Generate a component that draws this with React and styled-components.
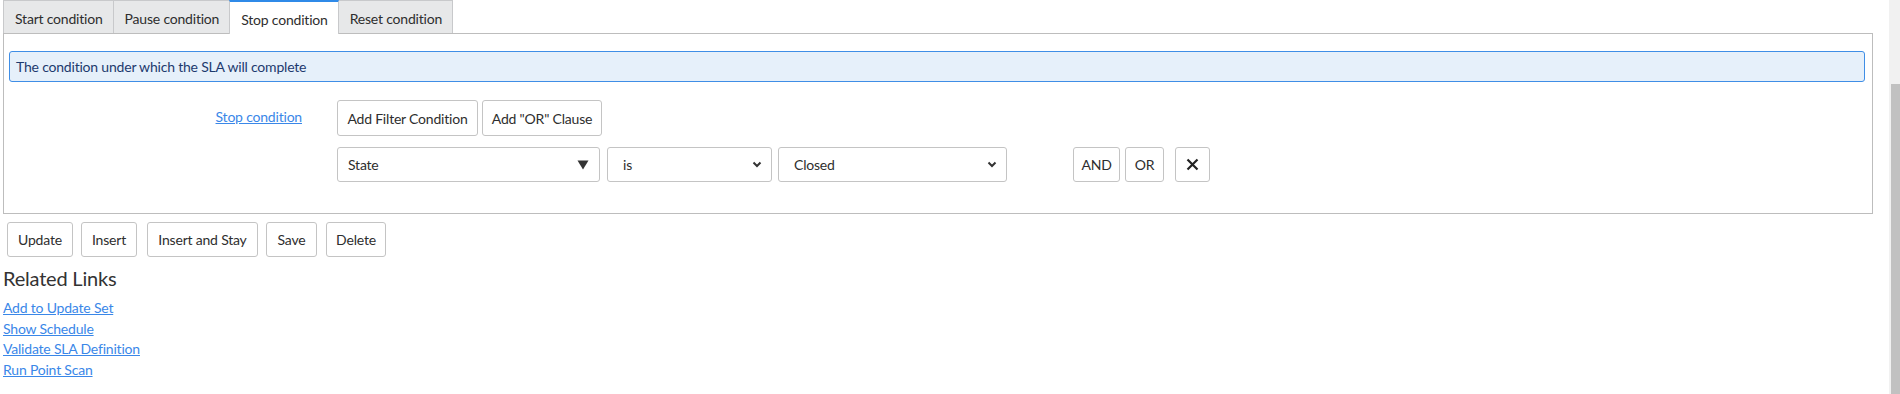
import { createGlobalStyle, styled } from "styled-components";

const GlobalStyle = createGlobalStyle`
	html, body {
		margin: 0;
		padding: 0;
		background: #fff;
	}
	body {
		font-family: Lato, "Liberation Sans", sans-serif;
		font-size: 14px;
		letter-spacing: -0.2px;
		color: #2e2e2e;
	}
`;

const Page = styled.div`
	display: flex;
	height: 394px;
	overflow: hidden;
`;

const Main = styled.div`
	flex: 1;
	padding: 0 16px 0 3px;
`;

const ScrollTrack = styled.div`
	width: 11px;
	background: #f1f1f1;
	display: flex;
	flex-direction: column;
	padding-top: 84px;
	padding-left: 2px;
	box-sizing: border-box;
`;

const ScrollThumb = styled.div`
	flex: 1;
	background: #c1c1c1;
`;

const TabBar = styled.div`
	display: flex;
	height: 33px;
`;

const Tab = styled.div`
	display: flex;
	align-items: center;
	padding: 2px 10px 0 11px;
	box-sizing: border-box;
	height: ${(p) => (p.$active ? "34px" : "33px")};
	margin-left: -1px;
	border: 1px solid #c8c9cb;
	border-bottom: none;
	border-top: ${(p) => (p.$active ? "2px solid #2f8ae8" : "1px solid #c8c9cb")};
	background: ${(p) => (p.$active ? "#fff" : "#e7e8e9")};
	position: relative;
	z-index: ${(p) => (p.$active ? 2 : 1)};
	color: #2e2e2e;
	&:first-child {
		margin-left: 0;
	}
`;

const Panel = styled.div`
	border: 1px solid #bdbdbd;
	padding: 17px 7px 31px 5px;
	height: 181px;
	box-sizing: border-box;
`;

const InfoBox = styled.div`
	height: 31px;
	box-sizing: border-box;
	border: 1px solid #3f8ee6;
	border-radius: 3px;
	background: #e6f0fa;
	color: #1d3a6e;
	display: flex;
	align-items: center;
	padding-left: 6px;
`;

const FilterGrid = styled.div`
	display: grid;
	grid-template-columns: 293px 1fr;
	column-gap: 35px;
	margin-top: 18px;
`;

const LabelCell = styled.div`
	text-align: right;
	padding-top: 8px;
`;

const Link = styled.a`
	color: #3a87e8;
	text-decoration: underline;
	cursor: pointer;
`;

const FilterBody = styled.div`
	display: flex;
	flex-direction: column;
	gap: 11px;
`;

const Row = styled.div`
	display: flex;
	align-items: center;
	gap: ${(p) => p.$gap || "0px"};
`;

const Button = styled.button`
	font: inherit;
	letter-spacing: inherit;
	white-space: nowrap;
	color: #2e2e2e;
	background: #fff;
	border: 1px solid #c4c4c4;
	border-radius: 3px;
	box-sizing: border-box;
	height: ${(p) => p.$h || "35px"};
	width: ${(p) => (p.$w ? `${p.$w}px` : "auto")};
	padding: 0;
	margin-left: ${(p) => p.$ml || 0}px;
	display: flex;
	align-items: center;
	justify-content: center;
	flex-shrink: 0;
	cursor: pointer;
`;

const SelectBox = styled.div`
	width: ${(p) => p.$w}px;
	height: 35px;
	box-sizing: border-box;
	border: 1px solid #c4c4c4;
	border-radius: 3px;
	margin-left: ${(p) => p.$ml || 0}px;
	display: flex;
	align-items: center;
	justify-content: space-between;
	padding: 0 ${(p) => p.$padR}px 0 ${(p) => p.$padL}px;
	color: #2e2e2e;
	background: #fff;
`;

const Actions = styled.div`
	display: flex;
	margin: 8px 0 0 4px;
`;

const Heading = styled.h2`
	margin: 8px 0 0 0;
	font-size: 20px;
	font-weight: 400;
	color: #333;
	line-height: 26px;
`;

const LinkList = styled.div`
	display: flex;
	flex-direction: column;
	margin-top: 7px;
	line-height: 20.7px;
	font-size: 14px;
`;

function Chevron() {
	return (
		<svg width="10" height="7" viewBox="0 0 10 7">
			<path d="M1.5 1.5 L5 5 L8.5 1.5" fill="none" stroke="#333" strokeWidth="2" />
		</svg>
	);
}

function Triangle() {
	return (
		<svg width="12" height="10" viewBox="0 0 12 10">
			<path d="M0.5 0.5 H11.5 L6 9.5 Z" fill="#333" />
		</svg>
	);
}

function Cross() {
	return (
		<svg width="13" height="13" viewBox="0 0 13 13">
			<path d="M1.5 1.5 L11.5 11.5 M11.5 1.5 L1.5 11.5" stroke="#222" strokeWidth="2.2" />
		</svg>
	);
}

const tabs = ["Start condition", "Pause condition", "Stop condition", "Reset condition"];
const actions = [
	{ label: "Update", w: 66, ml: 0 },
	{ label: "Insert", w: 56, ml: 8 },
	{ label: "Insert and Stay", w: 111, ml: 10 },
	{ label: "Save", w: 51, ml: 8 },
	{ label: "Delete", w: 60, ml: 9 },
];
const related = ["Add to Update Set", "Show Schedule", "Validate SLA Definition", "Run Point Scan"];

export default function App() {
	return (
		<>
			<GlobalStyle />
			<Page>
				<Main>
					<TabBar>
						{tabs.map((t) => (
							<Tab key={t} $active={t === "Stop condition"}>
								{t}
							</Tab>
						))}
					</TabBar>
					<Panel>
						<InfoBox>The condition under which the SLA will complete</InfoBox>
						<FilterGrid>
							<LabelCell>
								<Link>Stop condition</Link>
							</LabelCell>
							<FilterBody>
								<Row $gap="4px">
									<Button $h="36px" $w={141}>Add Filter Condition</Button>
									<Button $h="36px" $w={120}>Add "OR" Clause</Button>
								</Row>
								<Row>
									<SelectBox $w={263} $padL={10} $padR={10}>
										State
										<Triangle />
									</SelectBox>
									<SelectBox $w={165} $ml={7} $padL={15} $padR={9}>
										is
										<Chevron />
									</SelectBox>
									<SelectBox $w={229} $ml={6} $padL={15} $padR={9}>
										Closed
										<Chevron />
									</SelectBox>
									<Button $w={47} $ml={66}>AND</Button>
									<Button $w={39} $ml={5}>OR</Button>
									<Button $w={35} $ml={11}>
										<Cross />
									</Button>
								</Row>
							</FilterBody>
						</FilterGrid>
					</Panel>
					<Actions>
						{actions.map((a) => (
							<Button key={a.label} $w={a.w} $ml={a.ml}>
								{a.label}
							</Button>
						))}
					</Actions>
					<Heading>Related Links</Heading>
					<LinkList>
						{related.map((r) => (
							<div key={r}>
								<Link>{r}</Link>
							</div>
						))}
					</LinkList>
				</Main>
				<ScrollTrack>
					<ScrollThumb />
				</ScrollTrack>
			</Page>
		</>
	);
}
